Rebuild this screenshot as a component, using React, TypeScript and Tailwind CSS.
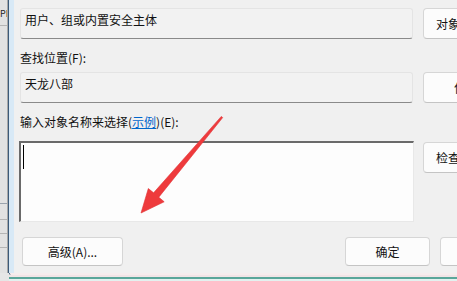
import React from 'react';

const font = { fontFamily: '"Noto Sans CJK SC", "Noto Sans", sans-serif' };

function ReadOnlyField({ text }: { text: string }) {
  return (
    <div className="h-[31px] w-[393px] shrink-0 rounded-[3px] border border-[#e4e4e4] border-b-[#8a8a8a] bg-[#f2f2f2] pl-[4px] pt-[3px] text-[12px] leading-[16px] text-[#111]">
      {text}
    </div>
  );
}

function WinButton({
  label,
  className = '',
}: {
  label: string;
  className?: string;
}) {
  return (
    <div
      className={`shrink-0 flex items-center rounded-[4px] border border-[#d6d6d6] border-b-[#c4c4c4] bg-[#fcfcfc] text-[12px] leading-[16px] text-[#111] ${className}`}
    >
      {label}
    </div>
  );
}

export default function App() {
  return (
    <div
      className="relative flex h-[281px] w-[457px] flex-col overflow-hidden bg-[#e4e4e4]"
      style={font}
    >
      <div className="flex h-[273px] w-full">
        {/* window behind the dialog */}
        <div className="flex w-[7px] shrink-0 flex-col bg-[#e2e2e2]">
          <div className="mt-[9px] h-[10px] overflow-hidden text-[9px] leading-[10px] text-[#222]">PE</div>
          <div className="mt-[6px] h-px bg-[#b5b5b5]" />
          <div className="mt-[177px] h-px bg-[#9aa3ad]" />
          <div className="mt-[15px] h-px bg-[#b5b5b5]" />
          <div className="mt-[13px] h-px bg-[#b5b5b5]" />
          <div className="mt-[13px] h-px bg-[#b5b5b5]" />
        </div>
        <div className="w-px shrink-0 bg-[#a8a8a8]" />
        {/* dialog frame */}
        <div className="w-px shrink-0 bg-[#3d5a78]" />
        <div className="w-[5px] shrink-0 bg-[#d8e9f6]" />
        <div className="flex flex-1 flex-col bg-[#f0f0f0] pl-[6px]">
          <div className="mt-[8px] flex gap-[10px]">
            <ReadOnlyField text="用户、组或内置安全主体" />
            <WinButton label="对象类型(O)..." className="h-[31px] w-[110px] pl-[12px]" />
          </div>
          <div className="mt-[11px] h-[16px] text-[12px] leading-[16px] text-[#111]">查找位置(F):</div>
          <div className="mt-[6px] flex gap-[10px]">
            <ReadOnlyField text="天龙八部" />
            <WinButton label="位置(L)..." className="h-[31px] w-[110px] pl-[30px]" />
          </div>
          <div className="mt-[11px] h-[16px] text-[12px] leading-[16px] text-[#111]">
            输入对象名称来选择(<span className="text-[#0066cc] underline">示例</span>)(E):
          </div>
          <div className="mt-[11px] flex gap-[9px]">
            <div className="-ml-px h-[81px] w-[395px] shrink-0 border-l-2 border-t-2 border-r border-b border-l-[#6a6a6a] border-t-[#6a6a6a] border-r-[#e8e8e8] border-b-[#e8e8e8] bg-[#fdfdfd] pl-[2px] pt-[2px]">
              <div className="h-[24px] w-px bg-black" />
            </div>
            <WinButton label="检查名称(C)" className="mt-px h-[31px] w-[110px] pl-[12px]" />
          </div>
          <div className="mt-[15px] flex">
            <WinButton label="高级(A)..." className="ml-[2px] h-[29px] w-[101px] justify-center" />
            <WinButton label="确定" className="ml-[222px] h-[29px] w-[85px] justify-center" />
            <WinButton label="取消" className="ml-[10px] h-[29px] w-[85px] justify-center" />
          </div>
        </div>
      </div>
      {/* dialog bottom edge */}
      <div className="flex flex-1">
        <div className="w-[9px] shrink-0 bg-[#e6e6e6]" />
        <div className="flex flex-1 flex-col">
          <div className="h-[2px] rounded-bl-[4px] border-l border-[#3d5a78] bg-[#f6eced]" />
          <div className="h-[2px] bg-[#f1e4e6]" />
          <div className="h-[2px] bg-[#5aa69a]" />
          <div className="flex-1 bg-[#e3f1ef]" />
        </div>
      </div>
      {/* annotation arrow */}
      <svg className="pointer-events-none absolute left-0 top-0" width="457" height="281" viewBox="0 0 457 281">
        <polygon
          points="141,213 148.3,188.5 153.6,192.8 221.3,116.4 222.7,117.6 158.8,197.2 164.2,201.8"
          fill="#ee3a3c"
          stroke="#e03236"
          strokeWidth="0.6"
          strokeLinejoin="round"
        />
      </svg>
    </div>
  );
}
